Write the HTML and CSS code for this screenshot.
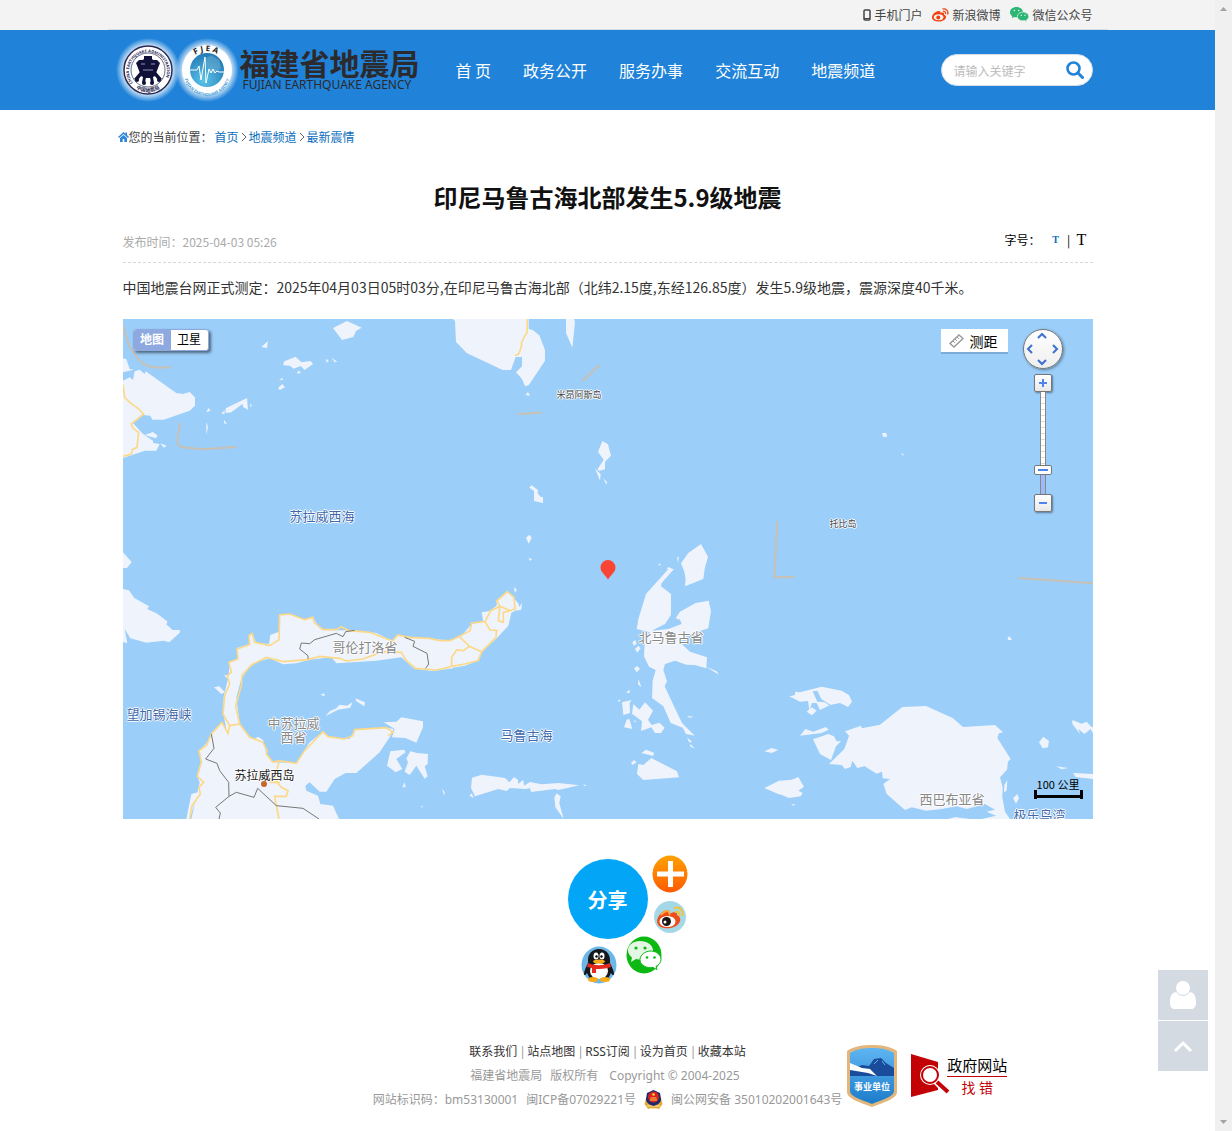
FILE: index.html
```html
<!DOCTYPE html>
<html lang="zh-CN">
  <head>
    <meta charset="UTF-8" />
    <meta name="viewport" content="width=device-width, initial-scale=1.0" />
    <title>印尼马鲁古海北部发生5.9级地震</title>
    <link rel="stylesheet" href="styles.css">
  </head>
  <body>
    <div class="topbar">
      <div class="container topbar-links">
        <a href="#">
          <svg width="8" height="12" viewBox="0 0 8 12"><rect x="1" y="1" width="6" height="10" rx="1" fill="none" stroke="#444" stroke-width="1.500" /><path d="M1 9.500h6" stroke="#444" /></svg>
          手机门户
        </a>
        <a href="#">
          <svg width="17" height="14" viewBox="0 0 17 14">
            <path d="M7 3C3 3 0 7 0 9.500C0 12 3 13.500 7 13.500C11.500 13.500 14 11 14 9C14 7.500 13 7 12 6.700C12.500 5 11 4 8.500 5C8.800 4 8.500 3 7 3Z" fill="#f4400c" />
            <ellipse cx="6.600" cy="9.300" rx="4.800" ry="3" fill="#f3f3f3" />
            <circle cx="6.300" cy="9.500" r="2" fill="#f4400c" />
            <path d="M10.500 1.200C14 .2 16.800 3 15.600 6.500M11 3.500C12.800 3 14 4.300 13.400 6" fill="none" stroke="#f4400c" stroke-width="1.300" />
          </svg>
          新浪微博
        </a>
        <a href="#">
          <svg width="19" height="15" viewBox="0 0 19 15">
            <path d="M6.500 0C2.800 0 0 2.300 0 5.200C0 7 1 8.300 2.300 9.200L2 11.200L4.200 10.100C9 11.200 13 8.500 13 5.200C13 2.300 10.200 0 6.500 0Z" fill="#2bb673" />
            <path d="M13 5C9.800 5 7.400 7 7.400 9.500C7.400 12.500 10.800 14.500 14.500 13.600L16.800 14.800L16.500 13C17.800 12 18.800 11 18.800 9.500C18.800 7 16.200 5 13 5Z" fill="#2bb673" stroke="#f3f3f3" stroke-width=".7" />
            <g fill="#f3f3f3"><circle cx="4.400" cy="3.500" r=".8" /><circle cx="8.700" cy="3.500" r=".8" /><circle cx="11.300" cy="8.300" r=".7" /><circle cx="15" cy="8.300" r=".7" /></g>
          </svg>
          微信公众号
        </a>
      </div>
    </div>

    <header class="header">
      <div class="container header-inner">
        <a class="logo" href="#">
          <svg class="logo-marks" width="126" height="72" viewBox="0 0 126 72">
            <defs>
              <radialGradient id="glow"><stop offset=".75" stop-color="#fff" stop-opacity=".8" /><stop offset="1" stop-color="#fff" stop-opacity="0" /></radialGradient>
              <radialGradient id="globe" cx=".4" cy=".8" r=".8"><stop offset="0" stop-color="#5bc3e8" /><stop offset="1" stop-color="#2279b5" /></radialGradient>
              <path id="ring-wide" d="M21 49A19 19 0 1 1 51 49" />
              <path id="ring-low" d="M20 51a22 22 0 0 0 32 0" />
              <path id="fjea" d="M76 31a20 20 0 0 1 38 0" />
              <path id="fjea-low" d="M72 39a23 23 0 0 0 46 0" />
            </defs>
            <circle cx="36" cy="36" r="32" fill="url(#glow)" />
            <circle cx="95" cy="36" r="32" fill="url(#glow)" />
            <circle cx="36" cy="36" r="24" fill="#fff" stroke="#2a2953" stroke-width="1.500" />
            <circle cx="36" cy="36" r="17" fill="none" stroke="#2a2953" stroke-width=".7" />
            <text class="ring-text"><textPath href="#ring-wide">CHINA EARTHQUAKE ADMINISTRATION</textPath></text>
            <text class="ring-cn"><textPath href="#ring-low" startOffset="50%">中国地震局</textPath></text>
            <g fill="#111038">
              <path d="M32 22h8v3l4 3 2 6-3 8-4 2h-6l-4-2-3-8 2-6 4-3z" />
              <path d="M27 26l-3 3 2 5h20l2-5-3-3zM28 38l-6 7 3 2 5-6zM44 38l6 7-3 2-5-6zM31 43l-1 6h3l1-6zM41 43l1 6h-3l-1-6z" />
              <circle cx="25" cy="46" r="2" /><circle cx="47" cy="46" r="2" /><circle cx="32" cy="49" r="2" /><circle cx="40" cy="49" r="2" />
            </g>
            <path d="M29 30h4M39 30h4M31 36h10" stroke="#8d93bb" />
            <circle cx="95" cy="36" r="25" fill="#fff" />
            <circle cx="95" cy="36" r="17" fill="url(#globe)" />
            <path d="M92 26l7-5 8 5 2 8-8 6-5-5z" fill="#6fb1d4" opacity=".5" />
            <path d="M77 36h8l2-4 2 14 4-23 1 26 3-14 2 4 2-4 2 4 2-2 2 1h6" fill="none" stroke="#fff" />
            <text class="fjea"><textPath href="#fjea" startOffset="50%">FJEA</textPath></text>
            <text class="ring-blue"><textPath href="#fjea-low" startOffset="50%">FUJIAN EARTHQUAKE AGENCY</textPath></text>
          </svg>
          <span class="logo-text">
            <strong>福建省地震局</strong>
            <span>FUJIAN EARTHQUAKE AGENCY</span>
          </span>
        </a>
        <nav class="nav">
          <a href="#">首 页</a>
          <a href="#">政务公开</a>
          <a href="#">服务办事</a>
          <a href="#">交流互动</a>
          <a href="#">地震频道</a>
        </nav>
        <form class="search">
          <input type="text" placeholder="请输入关键字" aria-label="请输入关键字" />
          <button type="button" aria-label="搜索">
            <svg width="18" height="18" viewBox="0 0 18 18" fill="none" stroke="#2083d9"><circle cx="7.500" cy="7.500" r="6" stroke-width="2.600" /><path d="M12 12l4.500 4.500" stroke-width="3" stroke-linecap="round" /></svg>
          </button>
        </form>
      </div>
    </header>

    <main class="container">
      <div class="breadcrumb">
        <svg width="11" height="10" viewBox="0 0 11 10" fill="#2e86d6"><path d="M5.500 0L0 5l1 1L5.500 2 10 6l1-1-2-2V.5H7.500V1.700z" /><path d="M5.500 3L2 6v4h2.700V7h1.600v3H9V6z" /></svg>
        <span class="breadcrumb-label">您的当前位置：</span>
        <a href="#">首页</a><svg class="sep" width="6" height="10" viewBox="0 0 6 10"><path d="M1 1l4 4-4 4" fill="none" stroke="#666" /></svg>
        <a href="#">地震频道</a><svg class="sep" width="6" height="10" viewBox="0 0 6 10"><path d="M1 1l4 4-4 4" fill="none" stroke="#666" /></svg>
        <a href="#">最新震情</a>
      </div>

      <article class="article">
        <h1>印尼马鲁古海北部发生5.9级地震</h1>
        <div class="meta">
          <time>发布时间：2025-04-03 05:26</time>
          <div class="font-size">
            <span>字号：</span>
            <button type="button" class="small-t">T</button>
            <span class="bar">|</span>
            <button type="button" class="large-t">T</button>
          </div>
        </div>
        <p>中国地震台网正式测定：2025年04月03日05时03分,在印尼马鲁古海北部（北纬2.15度,东经126.85度）发生5.9级地震，震源深度40千米。</p>

        <div class="map">
          <svg class="map-canvas" viewBox="0 0 2910 1500" preserveAspectRatio="xMidYMid slice">
            <!-- north west -->
            <g>
              <path class="land" d="M0 118L10 120 20 150 32 152 0 160zM0 185L20 175 30 183 35 157 50 152 65 165 68 157 160 222 180 225 200 219 216 235 216 260 200 275 122 302 88 302 82 290 60 288 30 312 60 345 90 365 90 372 110 375 100 395 66 395 0 417zM65 348L90 339 104 350 98 358zM112 373L131 380 122 386zM630 27L672 6 716 26 699 36 691 54 657 63zM415 84L435 66 432 87zM480 138L484 127 518 113 535 130 563 126 570 135 545 153 533 141 512 149 500 140zM522 164L526 154 534 161zM609 119L618 126 610 131zM626 116L643 128 635 130zM468 182L478 177 480 183zM465 207L478 195 486 205 470 213zM308 268L372 237 375 272 361 265 358 255 325 280 308 282zM381 253L387 260 382 264zM250 280L256 267 263 275zM295 285L305 273 305 284zM303 303L312 315 303 313zM250 308L255 325 250 348zM0 700L26 729 12 747 0 747z" />
              <path class="border-sea" d="M0 20C15 75 25 100 50 125 75 147 95 147 144 145M172 312L163 365Q165 383 180 385L240 391 340 384" />
              <path class="road" d="M0 197L5 235 20 250 45 268 62 285 25 315 30 328 47 340 42 385 28 392 25 405 0 412" />
            </g>
            <!-- north -->
            <g transform="translate(981 0)">
              <path class="land" d="M8 0L15 5 18 69 51 103 158 153 183 153 197 114 216 114 216 142 198 160 216 180 225 202 236 199 285 125 285 93 268 49 248 33 236 30 236 0zM348 0L372 0 375 8 367 86 348 42zM226 228L234 219 240 230zM457 366L474 376 483 410 465 428 465 451 447 456 443 450 461 422 444 399zM435 448L452 466 450 485zM460 478L471 489 469 497zM238 506L244 498 264 513 263 523 273 535 279 533 279 552 252 546 252 516zM228 656L238 647 245 656 236 674zM235 717L246 720 241 726zM681 718L686 712 685 733zM624 735L632 734 630 741zM693 733L715 702 753 675 774 713 764 750 760 780 705 802 708 770zM650 750L655 744 668 750z" />
              <path class="border-sea" d="M396 186L449 138M203 285L275 281M982 607L973 775 1032 774" />
              <path class="road" d="M232 0L231 42 223 52 215 70 214 85 205 106 195 109" />
            </g>
            <!-- north east -->
            <g transform="translate(1971 0)">
              <path class="land" d="M306 342L319 342 321 354 309 353zM363 404L369 403 371 410z" />
              <path class="border-sea" d="M715 777L942 793" />
            </g>
            <!-- sulawesi -->
            <g transform="translate(0 750)">
              <path class="land" d="M0 60L18 64 34 87 78 112 73 120 103 134 134 158 130 166 149 183 171 183 170 191 139 220 122 215 70 221 22 208 5 180 13 223 0 219zM205 750L230 640 222 620 235 575 228 545 255 518 270 490 297 460 310 480 300 430 302 385 317 320 320 280 345 270 342 237 380 225 378 200 387 193 400 222 438 225 442 198 468 188 470 138 500 135 545 152 568 143 590 178 620 184 690 184 760 192 808 216 825 198 870 205 990 215 990 298 930 306 875 300 835 265 760 275 640 283 625 265 560 272 520 283 480 286 440 268 400 280 375 300 355 330 340 385 350 465 375 500 395 510 405 503 420 513 430 555 450 580 520 582 560 520 600 488 620 505 680 510 695 482 790 476 812 480 800 505 770 550 700 612 668 612 635 630 610 668 590 668 560 640 547 650 550 665 585 680 592 705 630 710 648 750zM205 675L225 670 200 750 190 750zM303 318L320 320 318 334zM273 355L289 352 306 370 295 375zM592 377L603 373 606 382zM607 442L620 427 640 418 650 407 672 410 688 400 682 416 645 422zM697 388L726 400 724 412 700 397zM782 460L820 458 835 445 900 457 900 475 880 521 847 507 807 505 815 480zM802 547L843 542 848 550 820 570 838 600 818 610 792 590zM862 547L882 552 915 555 914 585 905 592 914 622 905 629 880 590 860 618 845 608 855 580 850 568zM838 655L845 640 848 655zM957 658L965 670 963 680zM893 711L901 713 896 716z" />
              <path class="road" d="M200 750L207 710 232 675 228 655 242 640 223 622 235 580 228 545 250 530 265 495 297 460 315 493 320 470M320 470L350 465M320 470L300 435 305 380 320 345 313 320 325 310 318 280 345 270 342 240 380 227 378 200 387 193 395 220 440 230 468 212 470 138 500 135 545 152 570 145 573 160 600 182 640 182 655 173 675 184 740 190 808 216 825 198 855 205 920 208 950 215 990 215M350 465L338 410 355 350 357 320 385 288 430 265 480 278 555 272 590 262 650 268 670 276 720 270 780 248 835 250 850 275 878 298 940 303 990 292M350 465L380 505 420 520 432 545 430 555 450 580 467 575 520 583 545 545 600 488 615 503 665 510 690 500 695 482 790 476 810 490 795 500M467 580L455 630 475 655 495 665 490 682 455 682 460 710 468 750M440 640L470 640" />
              <path class="province" d="M265 495L273 538 248 570 282 583 290 605 317 640 318 682 340 670 393 685 404 658 460 710 540 718 588 750M318 682L278 715 292 732 288 750M555 270L555 260 530 240 535 222 560 224 575 212 640 193 660 203 668 188 695 184M845 205L875 217 870 232 912 253 917 285 908 298" />
            </g>
            <!-- maluku -->
            <g transform="translate(981 750)">
              <path class="land" d="M0 216L35 200 65 165 100 158 95 130 118 126 140 110 140 96 172 68 192 88 206 105 208 118 184 132 175 170 138 210 95 250 80 277 45 290 0 298zM192 53L201 63 194 71zM198 125L216 103 214 122zM588 75L655 0 672 0 635 42 633 52 663 75 663 138 645 165 605 185 655 180 695 165 690 152 677 148 690 128 737 102 776 95 783 125 775 178 710 200 685 215 720 248 771 265 769 298 734 288 709 287 675 275 645 285 640 303 651 337 644 352 672 412 696 462 734 500 708 495 698 476 662 462 640 412 606 387 608 335 617 303 597 293 582 262 584 220 600 190 560 180 565 150zM769 293L800 307 806 317zM702 0L760 0 755 12 707 31zM547 220L556 213 560 225 551 230zM555 240L565 230 572 238 562 251zM552 298L562 291 570 300 560 310zM566 330L574 355 564 346zM528 371L538 362 540 372zM503 393L512 392 508 399zM516 400L545 393 539 402 540 432 520 438zM522 475L530 452 538 450 547 480zM550 405L568 422 585 400 609 425 594 452 605 468 628 461 644 476 633 492 615 492 604 475 573 486 576 457 546 434zM552 453L560 458 553 459zM711 440L732 444 718 446zM711 505L727 519 717 520zM720 524L734 537 722 534zM574 552L588 542 612 551 610 561zM543 582L552 573 560 580 548 588zM565 585L580 588 604 567 681 607 687 625 580 633 561 615zM66 626L95 617 165 627 178 640 192 624 204 632 204 645 220 632 222 650 240 639 275 646 325 642 388 649 325 663 315 660 243 669 240 658 225 660 180 657 170 666 145 660 75 682 63 657zM58 680L65 673 72 687zM400 646L411 650 402 651zM313 685L320 673 332 682 328 702 341 750 316 715zM943 547L965 537 985 543 965 552zM943 657L990 634 990 677z" />
              <path class="road" d="M0 215L28 202 60 185 65 162 105 158 122 125 150 112 140 96 172 68 192 85 195 120 180 125 150 112 145 155 160 160 160 130 180 125M105 158L120 183 140 184 138 205 95 248 85 275 45 285 0 293M28 202L58 232 95 248M58 232L40 245 20 243 5 265 5 290" />
            </g>
            <!-- papua -->
            <g transform="translate(1971 750)">
              <path class="land" d="M28 382L45 378 45 368 60 370 125 353 185 365 207 378 216 398 204 414 180 402 150 408 120 423 110 402 96 402 88 423 84 396 60 398zM80 428L95 415 110 425 96 439zM60 500L76 480 100 488 137 474 146 482 125 492zM99 511L145 495 162 502 170 517 183 517 168 532 153 573 120 555zM195 487L243 470 245 478 300 467 367 414 438 411 518 447 549 474 645 468 669 490 657 493 652 507 692 570 684 578 681 602 660 625 668 655 667 685 675 728 690 750 605 750 648 740 620 728 645 722 615 705 560 720 530 712 485 720 438 725 395 715 375 723 320 675 310 645 330 630 308 628 306 608 290 614 254 592 232 597 217 575 212 594 195 600 185 588 147 585 193 540 207 500zM0 635L35 632 55 624 72 653 55 665 68 672 62 682 27 687 0 676zM33 706L47 706 40 710zM683 208L688 201 696 213 684 213zM877 453L905 464 920 458 935 475 942 470 942 500 932 480 913 495 895 480 900 495 877 465zM777 520L790 503 807 516 804 535 788 538zM829 592L864 597 845 601zM879 612L942 615 942 630 887 624zM682 632L680 665 672 670 673 648zM699 688L712 675 717 688 708 704zM505 750L525 744 550 748 570 750z" />
              <path fill="#9bcef9" d="M98 367L112 365 124 390 152 408 145 408 135 400 112 398z" />
            </g>
          </svg>

          <span class="label sea sea-sulawesi">苏拉威西海</span>
          <span class="label sea sea-makassar">望加锡海峡</span>
          <span class="label sea sea-maluku">马鲁古海</span>
          <span class="label sea sea-bay">极乐鸟湾</span>
          <span class="label isle isle-miangas">米昂阿斯岛</span>
          <span class="label isle isle-tobi">托比岛</span>
          <span class="label province-name gorontalo">哥伦打洛省</span>
          <span class="label province-name central">中苏拉威<br>西省</span>
          <span class="label province-name north-maluku">北马鲁古省</span>
          <span class="label province-name west-papua">西巴布亚省</span>
          <span class="label island-name">苏拉威西岛</span>
          <span class="capital"></span>

          <svg class="marker" width="16" height="20" viewBox="0 0 16 20"><path d="M8 20C7 16 .5 13 .5 7.500a7.500 7.500 0 0 1 15 0C15.500 13 9 16 8 20z" fill="#fa4535" /></svg>

          <div class="map-type">
            <button type="button" class="active">地图</button>
            <button type="button">卫星</button>
          </div>

          <button type="button" class="measure">
            <svg width="15" height="14" viewBox="0 0 15 14" fill="none" stroke="#999" stroke-width="1.500"><path d="M10 1l4 3.500L5 13 1 9.500z" /><path d="M4 7l2 2M6 5l2 2M8 3l2 2" stroke-width="1" /></svg>
            测距
          </button>

          <div class="map-nav">
            <div class="pan">
              <button type="button" class="up" aria-label="向上平移"><svg viewBox="0 0 12 8"><path d="M2 6l4-4 4 4" /></svg></button>
              <button type="button" class="left" aria-label="向左平移"><svg viewBox="0 0 12 8"><path d="M2 6l4-4 4 4" /></svg></button>
              <button type="button" class="right" aria-label="向右平移"><svg viewBox="0 0 12 8"><path d="M2 6l4-4 4 4" /></svg></button>
              <button type="button" class="down" aria-label="向下平移"><svg viewBox="0 0 12 8"><path d="M2 6l4-4 4 4" /></svg></button>
            </div>
            <button type="button" class="zoom-btn" aria-label="放大"><svg width="8" height="8" viewBox="0 0 8 8"><path d="M0 4h8M4 0v8" stroke="#4f83ee" stroke-width="2" /></svg></button>
            <input class="zoom-range" type="range" min="0" max="100" value="21" aria-label="缩放级别" />
            <button type="button" class="zoom-btn" aria-label="缩小"><svg width="8" height="8" viewBox="0 0 8 8"><path d="M0 4h8" stroke="#4f83ee" stroke-width="2" /></svg></button>
          </div>

          <div class="scale">100 公里</div>
        </div>
      </article>

      <div class="share">
        <button type="button" class="share-main">分享</button>
        <a class="share-more" href="#" aria-label="更多">
          <svg width="36" height="38" viewBox="0 0 36 38"><defs><linearGradient id="orange" x2="0" y2="1"><stop offset="0" stop-color="#ffa200" /><stop offset="1" stop-color="#ff5a00" /></linearGradient></defs><ellipse cx="18" cy="19" rx="17.500" ry="18.500" fill="url(#orange)" /><path d="M5 19h27M18.500 6v26" stroke="#fff" stroke-width="5" /></svg>
        </a>
        <a class="share-weibo" href="#" aria-label="新浪微博">
          <svg width="32" height="32" viewBox="0 0 32 32"><circle cx="16" cy="16" r="16" fill="#a5d8e6" /><path d="M3 20C4 13 12 7 15 10c1 1 0 2 0 3 5-3 9-2 8 1 5 2 4 8-1 11C15 29 3 28 3 20z" fill="#ee4d1b" /><path d="M7 14c3-4 7-5 8-3s0 3 0 3" stroke="#ffa53a" stroke-width="2" fill="none" /><ellipse cx="13.500" cy="20.500" rx="8" ry="5.500" fill="#fff" /><circle cx="12.500" cy="20.500" r="4.500" fill="#1a1414" /><circle cx="11" cy="21" r="1.500" fill="#fff" /><path d="M20 7c6-2 10 3 8 8M21 11c3-1 5 1 4 4" fill="none" stroke="#f2c334" stroke-width="2" /></svg>
        </a>
        <a class="share-wechat" href="#" aria-label="微信">
          <svg width="36" height="38" viewBox="0 0 36 38"><ellipse cx="18" cy="19" rx="17.500" ry="18.500" fill="#0cb812" /><path d="M14 5C7 5 2 9 2 14.500c0 3 2 5.500 4 7L5 26l5-3c10 3 17-3 17-8.500S21 5 14 5z" fill="#e3f7e4" /><path d="M25 15c-6 0-11 4-11 8.500 0 6 7 9 13 8l4 2-1-3c3-2 5-4 5-7 0-5-5-8.500-10-8.500z" fill="#fff" stroke="#0cb812" /><g fill="#0cb812"><circle cx="10" cy="12" r="1.600" /><circle cx="19" cy="12" r="1.600" /><circle cx="21" cy="21.500" r="1.300" /><circle cx="28.500" cy="21.500" r="1.300" /></g></svg>
        </a>
        <a class="share-qq" href="#" aria-label="QQ">
          <svg width="36" height="38" viewBox="0 0 36 38"><ellipse cx="18" cy="19" rx="17.500" ry="18.500" fill="#6db7e8" /><path d="M18 3c-7 0-11 5-11 11v3c-2 4-4 8-4 11 0 2 2 1 3-1l3 6h18l3-6c1 2 3 3 3 1 0-3-2-7-4-11v-3c0-6-4-11-11-11z" fill="#16181c" /><ellipse cx="18" cy="25" rx="9" ry="8" fill="#fff" /><ellipse cx="15" cy="10" rx="2.500" ry="3.500" fill="#fff" /><ellipse cx="21" cy="10" rx="2.500" ry="3.500" fill="#fff" /><circle cx="15.500" cy="10.500" r="1.200" /><circle cx="20.500" cy="10.500" r="1.200" /><ellipse cx="18" cy="15.500" rx="6" ry="2" fill="#f9ab18" /><path d="M7 17c7 3 15 3 22 0l1 4c-6 2-11 2-15 2v4h-4v-5l-5-1z" fill="#e52b20" /><ellipse cx="12" cy="33.500" rx="5" ry="2.500" fill="#f9ab18" /><ellipse cx="24" cy="33.500" rx="5" ry="2.500" fill="#f9ab18" /></svg>
        </a>
      </div>
    </main>

    <footer class="footer">
      <div class="footer-text">
        <p class="footer-links"><a href="#">联系我们</a><span>|</span><a href="#">站点地图</a><span>|</span><a href="#">RSS订阅</a><span>|</span><a href="#">设为首页</a><span>|</span><a href="#">收藏本站</a></p>
        <p class="footer-copy"><span>福建省地震局</span><span>版权所有</span><span class="copyright">Copyright © 2004-2025</span></p>
        <p class="footer-record">
          <span>网站标识码：bm53130001</span>
          <a href="#">闽ICP备07029221号</a>
          <svg width="19" height="20" viewBox="0 0 19 20"><path d="M2 8l-1.500 6L4 19h11l3.500-5L17 8z" fill="#e5a83a" /><path d="M3 16h13M5 18.500h9" stroke="#fbe2a0" /><path d="M9.500 0L16 3l1 6c0 4-4 6-7.500 7C6 15 2 13 2 9l1-6z" fill="#1b2a6d" /><circle cx="9.500" cy="7" r="5.500" fill="#d8231c" /><circle cx="9.500" cy="4.500" r="1.300" fill="#f8d34a" /><path d="M6.500 8h6M6 10h7" stroke="#f8d34a" /></svg>
          <a href="#">闽公网安备 35010202001643号</a>
        </p>
      </div>
      <div class="footer-badges">
        <a href="#" aria-label="事业单位">
          <svg width="54" height="64" viewBox="0 0 54 64">
            <defs><linearGradient id="sky" x2="0" y2="1"><stop offset="0" stop-color="#5fb5f3" /><stop offset="1" stop-color="#1c7cc9" /></linearGradient></defs>
            <path d="M27 1c9 0 18 1 25 6v41c0 7-15 11-25 15C17 59 2 55 2 48V7C9 2 18 1 27 1z" fill="#e3b67c" />
            <path d="M27 4c8 0 16 1 22 5v38c0 6-13 9-22 13C18 56 5 53 5 47V9c6-4 14-5 22-5z" fill="url(#sky)" />
            <path d="M5 26l12-5 7 1 5-7 7-1 5 5 8 5v8H5z" fill="#1a4c9c" />
            <path d="M5 19l12 5 8 1 7 7-9-3-18-3z" fill="#fff" />
            <path d="M29 20l4-4M37 17l3 4" stroke="#5fb5f3" />
            <text class="badge-text" x="27" y="46">事业单位</text>
          </svg>
        </a>
        <a class="report" href="#">
          <svg width="40" height="44" viewBox="0 0 40 44"><path d="M1 0l27 8v28L1 43z" fill="#c30006" /><path d="M25 26l12 12" stroke="#fff" stroke-width="7" /><circle cx="20" cy="21" r="10" fill="#fff" /><circle cx="20" cy="21" r="8" fill="#fff" stroke="#c30006" stroke-width="2" /><path d="M27 28l11 10" stroke="#c30006" stroke-width="4" /></svg>
          <span class="report-text"><span>政府网站</span><strong>找 错</strong></span>
        </a>
      </div>
    </footer>

    <div class="side-tools">
      <button type="button" aria-label="用户">
        <svg width="28" height="30" viewBox="0 0 28 30" fill="#fff"><path d="M8 12c-6 0-7 5-7 11 0 4 2 6 5 6h16c3 0 5-2 5-6 0-6-1-11-7-11-3 4-9 4-12 0z" /><circle cx="14" cy="8" r="7.500" stroke="#d3dae1" /></svg>
      </button>
      <button type="button" aria-label="返回顶部">
        <svg width="20" height="12" viewBox="0 0 20 12"><path d="M2 11l8-8 8 8" fill="none" stroke="#fff" stroke-width="3" /></svg>
      </button>
    </div>

    <div class="scroll-rail">
      <svg width="7" height="4" viewBox="0 0 7 4"><path d="M0 4l3.500-4L7 4z" fill="#a3a3a3" /></svg>
      <svg width="7" height="4" viewBox="0 0 7 4"><path d="M0 0l3.500 4L7 0z" fill="#a3a3a3" /></svg>
    </div>
  </body>
</html>
```

FILE: styles.css
```css
* {
  margin: 0;
  padding: 0;
  box-sizing: border-box;
}

body {
  font-family: "Noto Sans CJK SC", sans-serif;
  font-size: 12px;
  line-height: 24px;
  color: #444;
  background: #fff;
  padding-right: 17px;
}

a {
  color: inherit;
  text-decoration: none;
}

button {
  font-family: inherit;
  border: none;
  background: none;
  cursor: pointer;
}

svg {
  display: block;
  flex-shrink: 0;
}

.container {
  max-width: 1000px;
  margin: 0 auto;
}

/* top bar */
.topbar {
  background: #f3f3f3;
}

.topbar-links {
  display: flex;
  justify-content: flex-end;
  gap: 10px;
  height: 30px;
  padding-right: 15px;
  border-bottom: 1px solid #cfdfec;
}

.topbar-links a {
  display: flex;
  align-items: center;
  gap: 3px;
}

/* header */
.header {
  background: #2083d9;
}

.header-inner {
  display: flex;
  align-items: center;
  height: 80px;
  padding: 0 15px 0 4px;
}

.logo {
  display: flex;
  align-items: center;
  gap: 2px;
  color: #2c2a2c;
}

.logo-text {
  display: flex;
  flex-direction: column;
}

.logo-text strong {
  font-size: 30px;
  line-height: 30px;
}

.logo-text span {
  font-family: "Noto Sans", sans-serif;
  font-size: 12px;
  line-height: 16px;
  padding-left: 3px;
}

.ring-text {
  font: bold 4px "Noto Sans", sans-serif;
  fill: #2a2953;
}

.ring-cn {
  font: bold 5px "Noto Sans CJK SC", sans-serif;
  fill: #2a2953;
  text-anchor: middle;
}

.fjea {
  font: bold 8px "Noto Sans", sans-serif;
  fill: #222;
  text-anchor: middle;
  letter-spacing: 2px;
}

.ring-blue {
  font: bold 4px "Noto Sans", sans-serif;
  fill: #3c9ad6;
  text-anchor: middle;
}

.nav {
  display: flex;
  gap: 32px;
  margin-left: 36px;
  font-size: 16px;
  color: #fff;
}

.search {
  display: flex;
  align-items: center;
  width: 152px;
  height: 32px;
  margin-left: auto;
  padding: 0 8px 0 12px;
  background: #fff;
  border: 1px solid #d5dde5;
  border-radius: 16px;
}

.search input {
  flex: 1;
  min-width: 0;
  border: none;
  outline: none;
  font-family: inherit;
  font-size: 12px;
}

.search input::placeholder {
  color: #bbb;
}

/* breadcrumb */
.breadcrumb {
  display: flex;
  align-items: center;
  padding: 15px 10px 0;
}

.breadcrumb-label {
  padding-right: 2px;
}

.breadcrumb a {
  color: #0a6ebd;
}

.sep {
  margin: 0 2px;
}

/* article */
.article {
  padding: 28px 15px 0;
}

h1 {
  font-size: 24px;
  line-height: 40px;
  text-align: center;
  color: #111;
}

.meta {
  display: flex;
  justify-content: space-between;
  align-items: center;
  height: 46px;
  border-bottom: 1px dashed #d8d8d8;
}

.meta time {
  color: #aaa;
  padding-top: 4px;
}

.font-size {
  display: flex;
  align-items: center;
  color: #000;
  padding-right: 2px;
}

.font-size button {
  width: 18px;
  font-family: "Liberation Serif", serif;
}

.small-t {
  margin-left: 6px;
  font-size: 10px;
  font-weight: bold;
  color: #0a6ebd;
}

.large-t {
  font-size: 16px;
}

.font-size .bar {
  width: 8px;
  text-align: center;
}

.article p {
  padding: 12px 0 20px;
  font-size: 14px;
  color: #333;
}

/* map */
.map {
  position: relative;
  height: 500px;
  overflow: hidden;
  background: #9bcef9;
  line-height: 14px;
}

.map-canvas {
  width: 100%;
  height: 100%;
}

.land {
  fill: #eff3fc;
}

.road {
  fill: none;
  stroke: #fbd988;
  stroke-width: 5;
}

.border-sea {
  fill: none;
  stroke: #c9c0b4;
  stroke-width: 6;
}

.province {
  fill: none;
  stroke: #777;
  stroke-width: 3;
}

.label {
  position: absolute;
  font-size: 13px;
  white-space: nowrap;
  text-align: center;
  text-shadow: 1px 0 #fff, -1px 0 #fff, 0 1px #fff, 0 -1px #fff;
}

.sea {
  color: #4069ac;
}

.province-name {
  color: #888;
}

.isle {
  font-size: 9px;
  color: #444;
}

.sea-sulawesi {
  left: 167px;
  top: 190px;
}

.sea-makassar {
  left: 4px;
  top: 388px;
}

.sea-maluku {
  left: 378px;
  top: 409px;
}

.sea-bay {
  left: 891px;
  top: 489px;
}

.isle-miangas {
  left: 434px;
  top: 69px;
}

.isle-tobi {
  left: 707px;
  top: 198px;
}

.gorontalo {
  left: 210px;
  top: 321px;
}

.central {
  left: 145px;
  top: 397px;
}

.north-maluku {
  left: 516px;
  top: 311px;
}

.west-papua {
  left: 797px;
  top: 473px;
}

.island-name {
  left: 112px;
  top: 449px;
  font-size: 12px;
  color: #222;
}

.capital {
  position: absolute;
  left: 138px;
  top: 462px;
  width: 6px;
  height: 6px;
  border-radius: 50%;
  background: #c4682c;
}

.marker {
  position: absolute;
  left: 477px;
  top: 241px;
}

.map-type {
  position: absolute;
  left: 10px;
  top: 10px;
  display: flex;
  border-radius: 3px;
  overflow: hidden;
  background: #fff;
  border: 1px solid #8ea8e0;
  box-shadow: 2px 2px 3px rgba(0, 0, 0, 0.5);
}

.map-type button {
  width: 37px;
  height: 20px;
  font-size: 12px;
  line-height: 16px;
  padding-bottom: 2px;
}

.map-type .active {
  background: #8ea8e0;
  color: #fff;
  font-weight: bold;
}

.measure {
  position: absolute;
  right: 85px;
  top: 10px;
  display: flex;
  align-items: center;
  gap: 6px;
  height: 25px;
  padding: 0 10px 0 8px;
  background: #fff;
  border-bottom: 2px solid #7dacd6;
  font-size: 14px;
}

.map-nav {
  position: absolute;
  right: 30px;
  top: 10px;
  display: flex;
  flex-direction: column;
  align-items: center;
}

.pan {
  display: grid;
  grid-template-columns: repeat(3, 1fr);
  grid-template-rows: repeat(3, 1fr);
  place-items: center;
  width: 40px;
  height: 40px;
  margin-bottom: 5px;
  border: 1px solid #777;
  border-radius: 50%;
  background: linear-gradient(#fff, #eee);
  box-shadow: 1px 1px 3px rgba(0, 0, 0, 0.4);
}

.pan svg {
  width: 12px;
  height: 8px;
  fill: none;
  stroke: #3d6fd1;
  stroke-width: 2;
}

.up {
  grid-area: 1 / 2;
}

.left {
  grid-area: 2 / 1;
  transform: rotate(-90deg);
}

.right {
  grid-area: 2 / 3;
  transform: rotate(90deg);
}

.down {
  grid-area: 3 / 2;
  transform: rotate(180deg);
}

.zoom-btn {
  display: grid;
  place-items: center;
  width: 18px;
  height: 18px;
  border: 1px solid #777;
  border-radius: 2px;
  background: linear-gradient(#fff, #e8e8e8);
  box-shadow: 1px 1px 2px rgba(0, 0, 0, 0.4);
}

.zoom-range {
  appearance: none;
  writing-mode: vertical-lr;
  direction: rtl;
  width: 18px;
  height: 102px;
  background: linear-gradient(transparent 78%, #9dbafc 78%) center / 4px 100% no-repeat,
    repeating-linear-gradient(#fff 0 5px, #ddd 5px 6px) center / 4px 100% no-repeat,
    linear-gradient(#888, #888) center / 6px 100% no-repeat;
}

.zoom-range::-webkit-slider-thumb {
  appearance: none;
  width: 18px;
  height: 10px;
  border: 1px solid #777;
  border-radius: 2px;
  background: linear-gradient(#4f83ee, #4f83ee) center / 10px 2px no-repeat, #fff;
}

.scale {
  position: absolute;
  right: 10px;
  bottom: 20px;
  width: 49px;
  height: 20px;
  font-size: 11px;
  line-height: 10px;
  text-align: center;
  color: #000;
  background: linear-gradient(#000, #000) left bottom / 3px 9px no-repeat,
    linear-gradient(#000, #000) right bottom / 3px 9px no-repeat,
    linear-gradient(#000, #000) left bottom 1px / 100% 3px no-repeat;
}

/* share */
.share {
  position: relative;
  width: 80px;
  height: 80px;
  margin: 40px auto 101px;
}

.share-main {
  width: 80px;
  height: 80px;
  border-radius: 50%;
  background: #03a5f7;
  color: #fff;
  font-size: 20px;
  font-weight: bold;
}

.share a {
  position: absolute;
}

.share-more {
  left: 84px;
  top: -4px;
}

.share-weibo {
  left: 86px;
  top: 42px;
}

.share-wechat {
  left: 58px;
  top: 77px;
}

.share-qq {
  left: 13px;
  top: 87px;
}

/* footer */
.footer {
  display: grid;
  grid-template-columns: 1fr auto 1fr;
  gap: 3px;
  padding-bottom: 19px;
  font-family: "Noto Sans", "Noto Sans CJK SC", sans-serif;
  color: #999;
}

.footer-text p {
  display: flex;
  justify-content: center;
  align-items: center;
}

.footer-text {
  grid-column: 2;
}

.footer-links {
  gap: 2px;
}

.footer-links span {
  width: 6px;
  text-align: center;
}

.footer-links a {
  color: #333;
}

.footer-copy {
  gap: 8px;
  padding-right: 5px;
}

.copyright {
  padding-left: 3px;
}

.footer-record {
  gap: 8px;
}

.footer-badges {
  display: flex;
  align-items: center;
  gap: 11px;
}

.badge-text {
  font: bold 9px "Noto Sans CJK SC", sans-serif;
  fill: #fff;
  text-anchor: middle;
}

.report {
  display: flex;
}

.report-text {
  display: flex;
  flex-direction: column;
  align-items: center;
  margin-left: -3px;
  font-size: 15px;
  line-height: 22px;
  color: #000;
}

.report-text span {
  border-bottom: 1px solid #c30006;
}

.report-text strong {
  font-size: 14px;
  font-weight: normal;
  color: #c30006;
}

/* floating tools */
.side-tools {
  position: fixed;
  right: 24px;
  bottom: 60px;
  display: flex;
  flex-direction: column;
  gap: 1px;
}

.side-tools button {
  display: grid;
  place-items: center;
  width: 50px;
  height: 50px;
  background: #d3dae1;
}

.scroll-rail {
  position: fixed;
  top: 0;
  right: 0;
  bottom: 0;
  display: flex;
  flex-direction: column;
  justify-content: space-between;
  align-items: center;
  width: 17px;
  padding: 7px 0;
  background: #f0f0f0;
}
```
